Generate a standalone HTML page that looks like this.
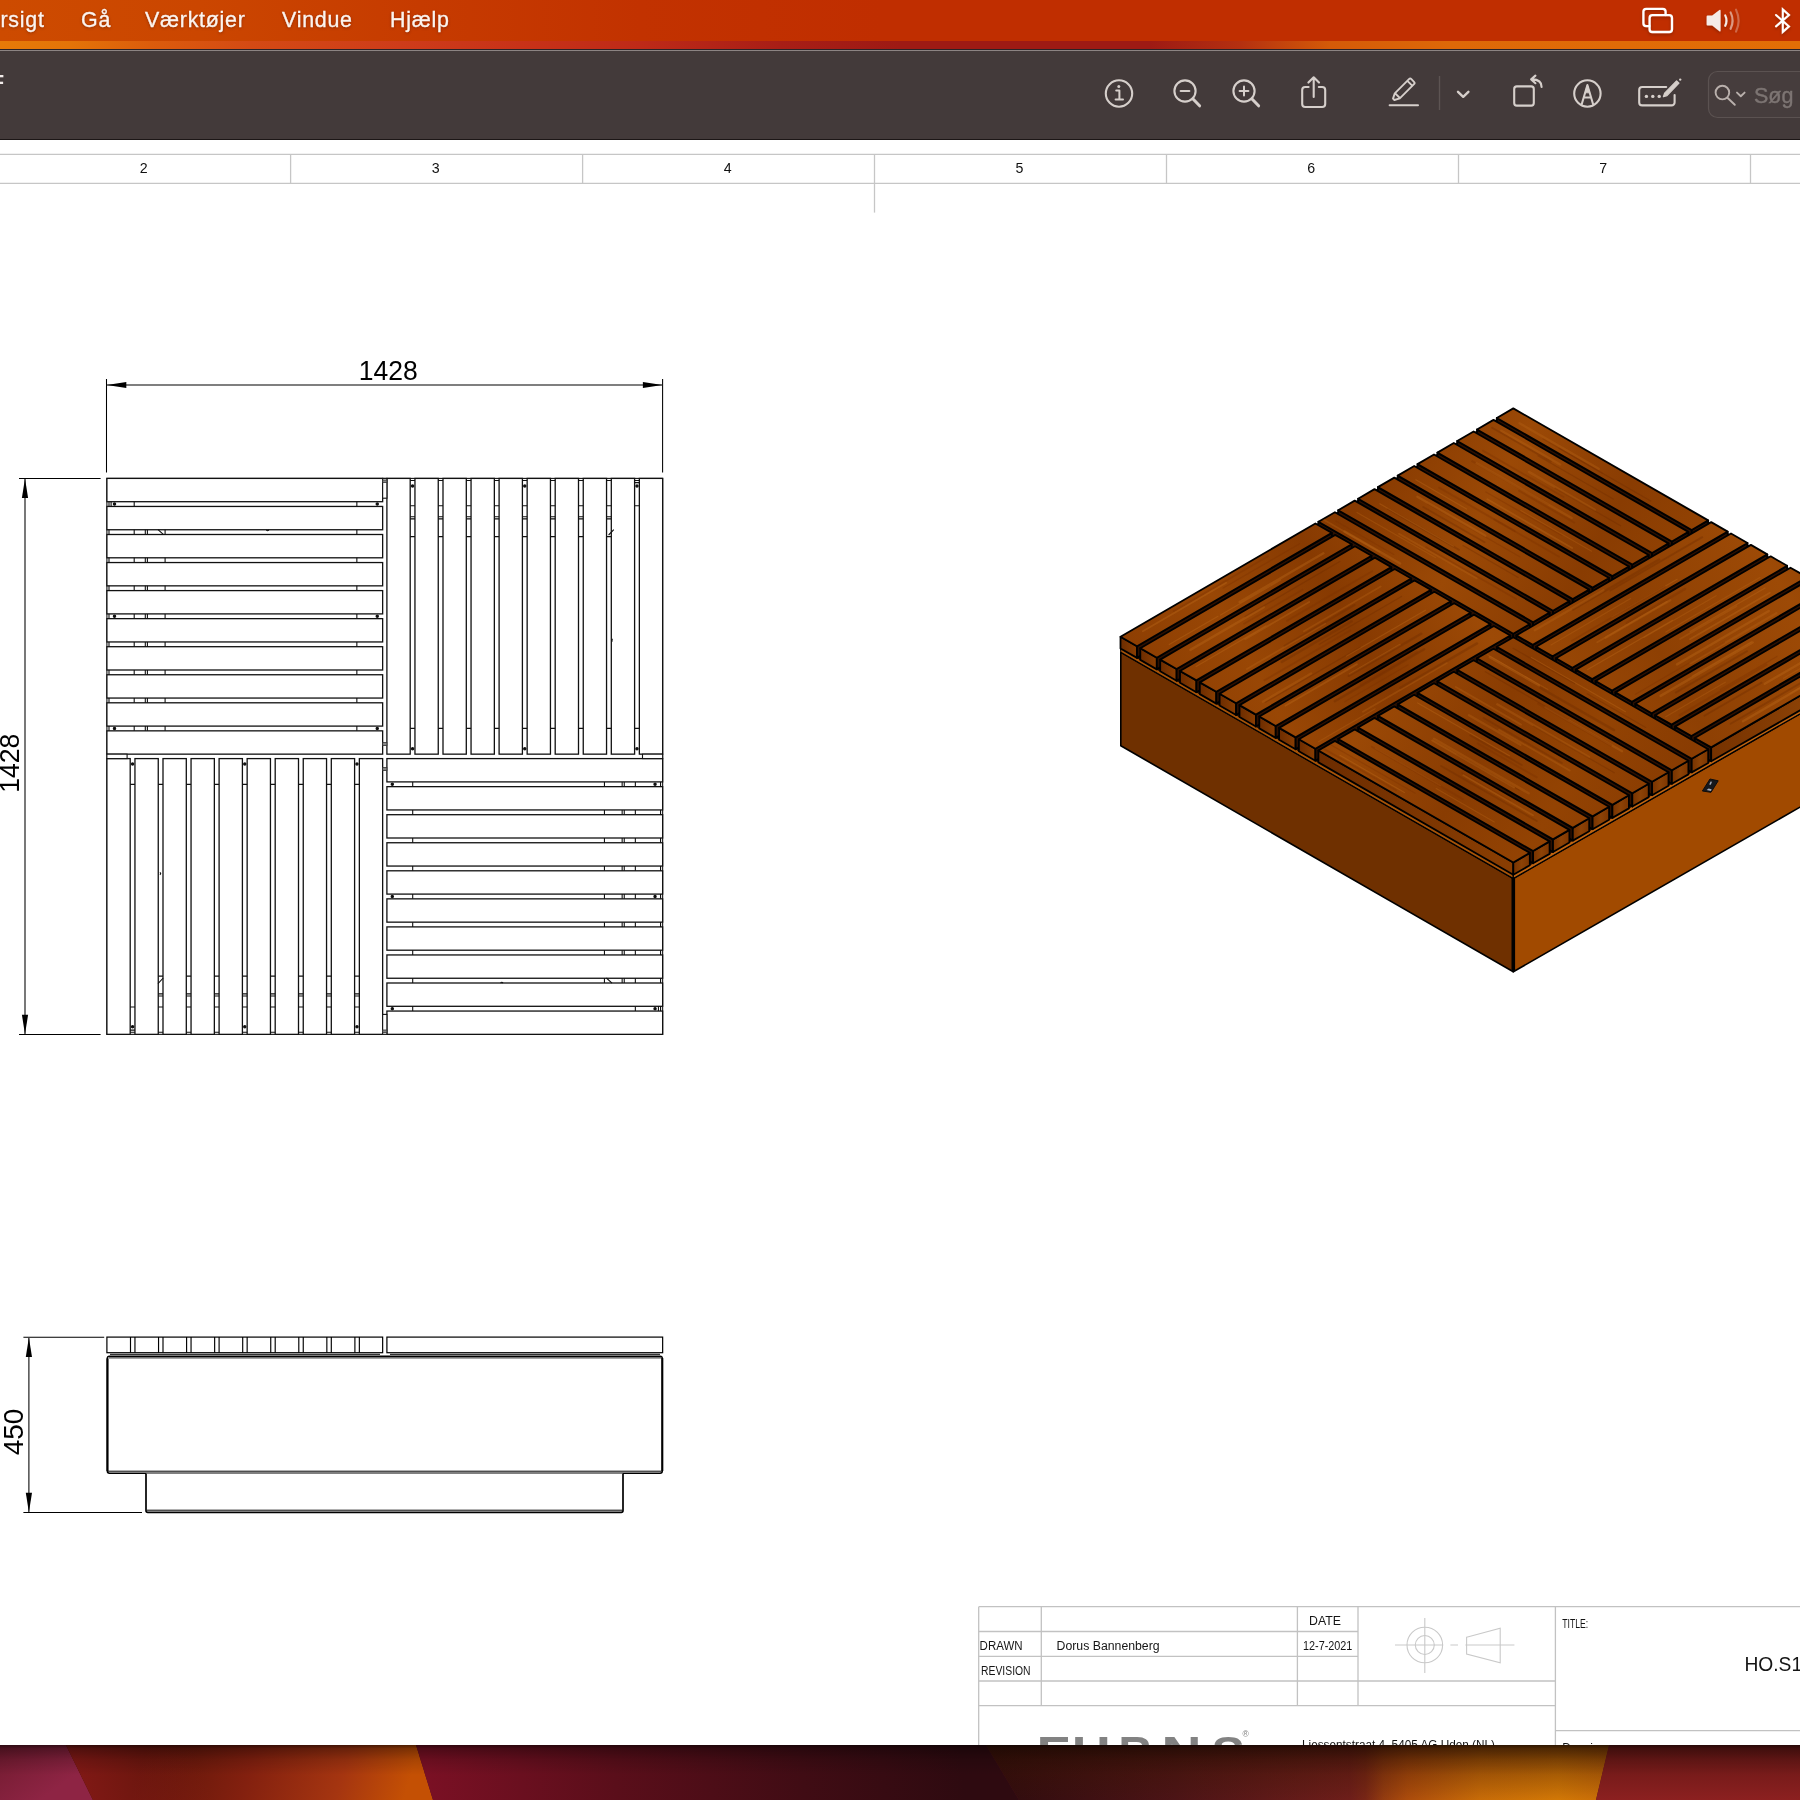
<!DOCTYPE html>
<html lang="da"><head><meta charset="utf-8"><title>HO.S10 – Preview</title>
<style>

html,body{margin:0;padding:0;background:#fff;}
body{width:1800px;height:1800px;overflow:hidden;position:relative;font-family:"Liberation Sans",sans-serif;}
.menubar{position:absolute;left:0;top:0;width:1800px;height:41px;background:linear-gradient(90deg,#cd4b00 0px,#cb4600 200px,#c63b00 420px,#c23200 640px,#c02e00 880px,#c02e00 1800px);overflow:hidden;}
.mi{position:absolute;top:8px;font-size:21.4px;letter-spacing:0.75px;line-height:24px;color:#fdf4ee;white-space:nowrap;text-shadow:0 1px 3px rgba(60,10,0,0.45),0 0 1px rgba(60,10,0,0.3);-webkit-text-stroke:0.35px #fdf4ee;}
.mbicons{position:absolute;left:0;top:0;}
.strip{position:absolute;left:0;top:41px;width:1800px;height:9px;background:linear-gradient(90deg,#e67a08 0px,#e47408 70px,#dc5c0c 150px,#d44a14 250px,#ce3c1a 400px,#c83218 520px,#be2a18 640px,#a81e16 780px,#9e1a14 900px,#9e1a14 1150px,#b43010 1240px,#d45a08 1330px,#de6808 1450px,#e26e06 1800px);}
.winedge0{position:absolute;left:0;top:49px;width:1800px;height:1px;background:#2a2226;}
.winedge1{position:absolute;left:0;top:50px;width:1800px;height:1px;background:#8c8483;}
.toolbar{position:absolute;left:0;top:51px;width:1800px;height:88px;background:#433a3a;overflow:hidden;}
.tbline{position:absolute;left:0;top:139px;width:1800px;height:1px;background:#1c1616;}
.ttl{position:absolute;left:-38px;top:19px;font-size:21px;line-height:24px;font-weight:bold;color:#f2ecea;}
.sog{position:absolute;left:1754px;top:33px;font-size:21.5px;line-height:24px;color:#7d7573;-webkit-text-stroke:0.4px #7d7573;}
.wall{position:absolute;left:0;top:1744px;}
#dwg{position:absolute;left:0;top:140px;will-change:transform;}
.menubar,.toolbar{will-change:transform;}


.tv{fill:url(#gtv);}
.tu{fill:url(#gtu);}
.sl{fill:url(#gsl);}
.sr{fill:url(#gsr);}
.sg{fill:#2e1000;}

#dwg text{font-family:"Liberation Sans",sans-serif;}
</style></head>
<body>
<svg id="dwg" width="1800" height="1605" viewBox="0 140 1800 1605">
<g stroke="#c6c6c6" stroke-width="1.3" fill="none">
<path d="M0 154.3 H1800 M0 183.3 H1800"/>
<path d="M290.6 154.3 V183.3"/>
<path d="M582.6 154.3 V183.3"/>
<path d="M1166.5 154.3 V183.3"/>
<path d="M1458.5 154.3 V183.3"/>
<path d="M1750.5 154.3 V183.3"/>
<path d="M874.5 154.3 V212.6"/>
</g>
<g font-size="14.2" fill="#111" text-anchor="middle">
<text x="143.8" y="173.2">2</text>
<text x="435.6" y="173.2">3</text>
<text x="727.6" y="173.2">4</text>
<text x="1019.4" y="173.2">5</text>
<text x="1311.3" y="173.2">6</text>
<text x="1603.3" y="173.2">7</text>
</g>
<g fill="#fff" stroke="#111" stroke-width="1.3" stroke-linejoin="miter">
<rect x="106.9" y="478.4" width="555.75" height="555.95" fill="none" stroke-width="1.1"/>
<rect x="106.9" y="478.4" width="275.75" height="23.3"/>
<rect x="106.9" y="506.45" width="275.75" height="23.3"/>
<rect x="106.9" y="534.5" width="275.75" height="23.3"/>
<rect x="106.9" y="562.55" width="275.75" height="23.3"/>
<rect x="106.9" y="590.6" width="275.75" height="23.3"/>
<rect x="106.9" y="618.65" width="275.75" height="23.3"/>
<rect x="106.9" y="646.7" width="275.75" height="23.3"/>
<rect x="106.9" y="674.75" width="275.75" height="23.3"/>
<rect x="106.9" y="702.8" width="275.75" height="23.3"/>
<rect x="106.9" y="730.85" width="275.75" height="23.3"/>
<circle cx="114.5" cy="504.07" r="1.1" fill="#000"/><circle cx="377.25" cy="504.07" r="1.1" fill="#000"/>
<circle cx="114.5" cy="616.27" r="1.1" fill="#000"/><circle cx="377.25" cy="616.27" r="1.1" fill="#000"/>
<circle cx="114.5" cy="728.47" r="1.1" fill="#000"/><circle cx="377.25" cy="728.47" r="1.1" fill="#000"/>
<path d="M109 501.7V506.45M111.1 501.7V506.45M134.2 501.7V506.45M356.85 501.7V506.45M109 529.75V534.5M134.2 529.75V534.5M145.3 529.75V534.5M147.4 529.75V534.5M165.1 529.75V534.5M356.85 529.75V534.5M109 557.8V562.55M134.2 557.8V562.55M145.3 557.8V562.55M147.4 557.8V562.55M165.1 557.8V562.55M356.85 557.8V562.55M109 585.85V590.6M134.2 585.85V590.6M145.3 585.85V590.6M147.4 585.85V590.6M165.1 585.85V590.6M356.85 585.85V590.6M109 613.9V618.65M134.2 613.9V618.65M145.3 613.9V618.65M147.4 613.9V618.65M165.1 613.9V618.65M356.85 613.9V618.65M109 641.95V646.7M134.2 641.95V646.7M145.3 641.95V646.7M147.4 641.95V646.7M165.1 641.95V646.7M356.85 641.95V646.7M109 670V674.75M134.2 670V674.75M145.3 670V674.75M147.4 670V674.75M165.1 670V674.75M356.85 670V674.75M109 698.05V702.8M134.2 698.05V702.8M145.3 698.05V702.8M147.4 698.05V702.8M165.1 698.05V702.8M356.85 698.05V702.8M109 726.1V730.85M134.2 726.1V730.85M145.3 726.1V730.85M147.4 726.1V730.85M165.1 726.1V730.85M356.85 726.1V730.85" stroke-width="1.1"/>
<rect x="386.9" y="478.4" width="23.3" height="275.75"/>
<rect x="414.95" y="478.4" width="23.3" height="275.75"/>
<rect x="443" y="478.4" width="23.3" height="275.75"/>
<rect x="471.05" y="478.4" width="23.3" height="275.75"/>
<rect x="499.1" y="478.4" width="23.3" height="275.75"/>
<rect x="527.15" y="478.4" width="23.3" height="275.75"/>
<rect x="555.2" y="478.4" width="23.3" height="275.75"/>
<rect x="583.25" y="478.4" width="23.3" height="275.75"/>
<rect x="611.3" y="478.4" width="23.3" height="275.75"/>
<rect x="639.35" y="478.4" width="23.3" height="275.75"/>
<circle cx="412.57" cy="486" r="1.1" fill="#000"/><circle cx="412.57" cy="748.75" r="1.1" fill="#000"/>
<circle cx="524.77" cy="486" r="1.1" fill="#000"/><circle cx="524.77" cy="748.75" r="1.1" fill="#000"/>
<circle cx="636.97" cy="486" r="1.1" fill="#000"/><circle cx="636.97" cy="748.75" r="1.1" fill="#000"/>
<path d="M410.2 480.5H414.95M410.2 505.7H414.95M410.2 516.8H414.95M410.2 518.9H414.95M410.2 536.6H414.95M410.2 728.35H414.95M438.25 480.5H443M438.25 505.7H443M438.25 516.8H443M438.25 518.9H443M438.25 536.6H443M438.25 728.35H443M466.3 480.5H471.05M466.3 505.7H471.05M466.3 516.8H471.05M466.3 518.9H471.05M466.3 536.6H471.05M466.3 728.35H471.05M494.35 480.5H499.1M494.35 505.7H499.1M494.35 516.8H499.1M494.35 518.9H499.1M494.35 536.6H499.1M494.35 728.35H499.1M522.4 480.5H527.15M522.4 505.7H527.15M522.4 516.8H527.15M522.4 518.9H527.15M522.4 536.6H527.15M522.4 728.35H527.15M550.45 480.5H555.2M550.45 505.7H555.2M550.45 516.8H555.2M550.45 518.9H555.2M550.45 536.6H555.2M550.45 728.35H555.2M578.5 480.5H583.25M578.5 505.7H583.25M578.5 516.8H583.25M578.5 518.9H583.25M578.5 536.6H583.25M578.5 728.35H583.25M606.55 480.5H611.3M606.55 505.7H611.3M606.55 516.8H611.3M606.55 518.9H611.3M606.55 536.6H611.3M606.55 728.35H611.3M634.6 480.5H639.35M634.6 482.6H639.35M634.6 505.7H639.35M634.6 728.35H639.35" stroke-width="1.1"/>
<rect x="106.9" y="758.6" width="23.3" height="275.75"/>
<rect x="134.95" y="758.6" width="23.3" height="275.75"/>
<rect x="163" y="758.6" width="23.3" height="275.75"/>
<rect x="191.05" y="758.6" width="23.3" height="275.75"/>
<rect x="219.1" y="758.6" width="23.3" height="275.75"/>
<rect x="247.15" y="758.6" width="23.3" height="275.75"/>
<rect x="275.2" y="758.6" width="23.3" height="275.75"/>
<rect x="303.25" y="758.6" width="23.3" height="275.75"/>
<rect x="331.3" y="758.6" width="23.3" height="275.75"/>
<rect x="359.35" y="758.6" width="23.3" height="275.75"/>
<circle cx="132.58" cy="1026.75" r="1.1" fill="#000"/><circle cx="132.58" cy="764" r="1.1" fill="#000"/>
<circle cx="244.78" cy="1026.75" r="1.1" fill="#000"/><circle cx="244.78" cy="764" r="1.1" fill="#000"/>
<circle cx="356.98" cy="1026.75" r="1.1" fill="#000"/><circle cx="356.98" cy="764" r="1.1" fill="#000"/>
<path d="M130.2 1032.25H134.95M130.2 1030.15H134.95M130.2 1007.05H134.95M130.2 784.4H134.95M158.25 1032.25H163M158.25 1007.05H163M158.25 995.95H163M158.25 993.85H163M158.25 976.15H163M158.25 784.4H163M186.3 1032.25H191.05M186.3 1007.05H191.05M186.3 995.95H191.05M186.3 993.85H191.05M186.3 976.15H191.05M186.3 784.4H191.05M214.35 1032.25H219.1M214.35 1007.05H219.1M214.35 995.95H219.1M214.35 993.85H219.1M214.35 976.15H219.1M214.35 784.4H219.1M242.4 1032.25H247.15M242.4 1007.05H247.15M242.4 995.95H247.15M242.4 993.85H247.15M242.4 976.15H247.15M242.4 784.4H247.15M270.45 1032.25H275.2M270.45 1007.05H275.2M270.45 995.95H275.2M270.45 993.85H275.2M270.45 976.15H275.2M270.45 784.4H275.2M298.5 1032.25H303.25M298.5 1007.05H303.25M298.5 995.95H303.25M298.5 993.85H303.25M298.5 976.15H303.25M298.5 784.4H303.25M326.55 1032.25H331.3M326.55 1007.05H331.3M326.55 995.95H331.3M326.55 993.85H331.3M326.55 976.15H331.3M326.55 784.4H331.3M354.6 1032.25H359.35M354.6 1007.05H359.35M354.6 995.95H359.35M354.6 993.85H359.35M354.6 976.15H359.35M354.6 784.4H359.35" stroke-width="1.1"/>
<rect x="386.9" y="758.6" width="275.75" height="23.3"/>
<rect x="386.9" y="786.65" width="275.75" height="23.3"/>
<rect x="386.9" y="814.7" width="275.75" height="23.3"/>
<rect x="386.9" y="842.75" width="275.75" height="23.3"/>
<rect x="386.9" y="870.8" width="275.75" height="23.3"/>
<rect x="386.9" y="898.85" width="275.75" height="23.3"/>
<rect x="386.9" y="926.9" width="275.75" height="23.3"/>
<rect x="386.9" y="954.95" width="275.75" height="23.3"/>
<rect x="386.9" y="983" width="275.75" height="23.3"/>
<rect x="386.9" y="1011.05" width="275.75" height="23.3"/>
<circle cx="655.05" cy="784.27" r="1.1" fill="#000"/><circle cx="392.3" cy="784.27" r="1.1" fill="#000"/>
<circle cx="655.05" cy="896.48" r="1.1" fill="#000"/><circle cx="392.3" cy="896.48" r="1.1" fill="#000"/>
<circle cx="655.05" cy="1008.67" r="1.1" fill="#000"/><circle cx="392.3" cy="1008.67" r="1.1" fill="#000"/>
<path d="M660.55 781.9V786.65M635.35 781.9V786.65M624.25 781.9V786.65M622.15 781.9V786.65M604.45 781.9V786.65M412.7 781.9V786.65M660.55 809.95V814.7M635.35 809.95V814.7M624.25 809.95V814.7M622.15 809.95V814.7M604.45 809.95V814.7M412.7 809.95V814.7M660.55 838V842.75M635.35 838V842.75M624.25 838V842.75M622.15 838V842.75M604.45 838V842.75M412.7 838V842.75M660.55 866.05V870.8M635.35 866.05V870.8M624.25 866.05V870.8M622.15 866.05V870.8M604.45 866.05V870.8M412.7 866.05V870.8M660.55 894.1V898.85M635.35 894.1V898.85M624.25 894.1V898.85M622.15 894.1V898.85M604.45 894.1V898.85M412.7 894.1V898.85M660.55 922.15V926.9M635.35 922.15V926.9M624.25 922.15V926.9M622.15 922.15V926.9M604.45 922.15V926.9M412.7 922.15V926.9M660.55 950.2V954.95M635.35 950.2V954.95M624.25 950.2V954.95M622.15 950.2V954.95M604.45 950.2V954.95M412.7 950.2V954.95M660.55 978.25V983M635.35 978.25V983M624.25 978.25V983M622.15 978.25V983M604.45 978.25V983M412.7 978.25V983M660.55 1006.3V1011.05M658.45 1006.3V1011.05M635.35 1006.3V1011.05M412.7 1006.3V1011.05" stroke-width="1.1"/>
<path d="M158 529.7 l5.6 5 M608.6 535 l5.2 -5.4 M158 983.6 l5.2 -5.6 M606.4 978 l5.6 5.2 M266.4 529.9 q1.2 1.8 2.4 0 M612.6 639 q-1.6 1.2 0 2.4 M159.9 872.4 q1.6 1.2 0 2.4 M500.6 983.1 q1.2 -1.8 2.4 0" fill="none" stroke-width="1.1"/>
<rect x="382.65" y="478.4" width="4.25" height="19.8" stroke-width="1.1"/>
<rect x="382.65" y="1014.4" width="4.25" height="19.9" stroke-width="1.1"/>
<rect x="106.9" y="754.15" width="20.2" height="4.45" stroke-width="1.1"/>
<rect x="642.5" y="754.15" width="20.15" height="4.45" stroke-width="1.1"/>
<g fill="#8a8a8a" stroke="#333" stroke-width="0.8"><rect x="382.7" y="742.6" width="4.2" height="3"/><rect x="382.7" y="767.6" width="4.2" height="3"/><rect x="382.7" y="480" width="4.2" height="2.4"/><rect x="382.7" y="1030" width="4.2" height="2.4"/></g>
</g>
<g stroke="#000" stroke-width="1.05" fill="none">
<path d="M106.5 379 V472.6 M662.6 379 V472.6 M107 385 H662"/>
<path d="M19 478.5 H100.6 M19 1034.4 H100.6 M25 479 V1034"/>
</g>
<polygon points="106.8,385 126.3,381.9 126.3,388.1" fill="#000" stroke="none"/>
<polygon points="662.4,385 642.9,388.1 642.9,381.9" fill="#000" stroke="none"/>
<polygon points="25,478.6 28.1,498.1 21.9,498.1" fill="#000" stroke="none"/>
<polygon points="25,1034.2 21.9,1014.7 28.1,1014.7" fill="#000" stroke="none"/>
<text x="358.8" y="379.6" font-size="28" textLength="59" lengthAdjust="spacingAndGlyphs" fill="#000" class="dim">1428</text>
<text transform="translate(19 763.2) rotate(-90)" font-size="28" text-anchor="middle" textLength="59" lengthAdjust="spacingAndGlyphs" fill="#000" class="dim">1428</text>
<g fill="#fff" stroke="#000" stroke-width="1.2">
<rect x="106.9" y="1337.1" width="275.75" height="15.6"/>
<path d="M130.5 1337.1V1352.7M134.95 1337.1V1352.7M158.55 1337.1V1352.7M163 1337.1V1352.7M186.6 1337.1V1352.7M191.05 1337.1V1352.7M214.65 1337.1V1352.7M219.1 1337.1V1352.7M242.7 1337.1V1352.7M247.15 1337.1V1352.7M270.75 1337.1V1352.7M275.2 1337.1V1352.7M298.8 1337.1V1352.7M303.25 1337.1V1352.7M326.85 1337.1V1352.7M331.3 1337.1V1352.7M354.9 1337.1V1352.7M359.35 1337.1V1352.7" fill="none" stroke-width="1.15"/>
<rect x="386.9" y="1337.1" width="275.75" height="15.6"/>
<path d="M110 1354.3 H380 M390 1354.3 H660" fill="none" stroke-width="1"/>
<rect x="107.3" y="1356.2" width="555" height="117" rx="2.2" stroke-width="1.5"/>
<path d="M109 1357.9 H661" fill="none" stroke-width="0.9"/>
<path d="M107.5 1358.4 V1471" fill="none" stroke-width="2.1"/>
<path d="M108 1471.2 H661.6" fill="none" stroke-width="1"/>
<path d="M662.3 1358 V1471" fill="none" stroke-width="2"/>
<path d="M146 1473.4 V1510.6 q0 1.8 1.8 1.8 H621.2 q1.8 0 1.8 -1.8 V1473.4" stroke-width="1.7"/>
<path d="M147 1510.2 H622" fill="none" stroke-width="1"/>
</g>
<g stroke="#000" stroke-width="1.05" fill="none">
<path d="M23.4 1337.2 H104.2 M23.4 1512.4 H142 M28.9 1338 V1512"/>
</g>
<polygon points="28.9,1337.4 32,1356.9 25.8,1356.9" fill="#000" stroke="none"/>
<polygon points="28.9,1512.2 25.8,1492.7 32,1492.7" fill="#000" stroke="none"/>
<text transform="translate(22.9 1432) rotate(-90)" font-size="28" text-anchor="middle" fill="#000" class="dim">450</text>
<defs>
<linearGradient id="gtv" gradientUnits="userSpaceOnUse" x1="1120" y1="640" x2="1520" y2="410" spreadMethod="reflect">
<stop offset="0" stop-color="#8d3e02"/><stop offset="0.22" stop-color="#994705"/><stop offset="0.45" stop-color="#873a01"/><stop offset="0.7" stop-color="#9d4a06"/><stop offset="1" stop-color="#8e4003"/></linearGradient>
<linearGradient id="gtu" gradientUnits="userSpaceOnUse" x1="1120" y1="640" x2="1520" y2="866" spreadMethod="reflect">
<stop offset="0" stop-color="#904103"/><stop offset="0.3" stop-color="#873a01"/><stop offset="0.55" stop-color="#9b4906"/><stop offset="0.8" stop-color="#893c02"/><stop offset="1" stop-color="#934303"/></linearGradient>
<linearGradient id="gsl" x1="0" y1="0" x2="1" y2="0"><stop offset="0" stop-color="#6c2c00"/><stop offset="1" stop-color="#8a3e02"/></linearGradient>
<linearGradient id="gsr" x1="0" y1="0" x2="1" y2="0"><stop offset="0" stop-color="#763200"/><stop offset="0.5" stop-color="#8c4206"/><stop offset="1" stop-color="#7e3600"/></linearGradient>
<clipPath id="isoclip"><rect x="1000" y="300" width="800" height="800"/></clipPath>
</defs>
<g clip-path="url(#isoclip)" stroke-linejoin="round">
<polygon points="1120.8,652.3 1513.3,878.5 1513.3,971.8 1120.8,745.8" fill="#6f3000" stroke="#000" stroke-width="1.6"/>
<polygon points="1513.3,878.5 1906.1,652.8 1906.1,746.1 1513.3,971.8" fill="#a14a00" stroke="#000" stroke-width="1.6"/>
<polygon points="1120.5,648.0 1513.3,874.2 1513.3,878.5 1120.8,652.3" fill="#a85408" stroke="#000" stroke-width="1.1"/>
<polygon points="1513.3,874.2 1906.1,648.9 1906.1,652.8 1513.3,878.5" fill="#c06410" stroke="#000" stroke-width="1.1"/>
<polygon points="1120.5,637.8 1120.5,648.5 1513.3,874.7 1906.1,649.6 1906.1,635.4 1513.3,409.6" fill="#2a0f00"/>
<path d="M1513.3 877.5 V970.8" stroke="#000" stroke-width="3.6" stroke-linecap="butt"/>
<polygon points="1710,779 1718.2,780.8 1711,792.3 1702.4,791" fill="#17181c" stroke="#0c0c0e" stroke-width="1" stroke-linejoin="round"/>
<path d="M1710.6 781.4 l1.4 0.4 l-1.2 3 l-1.6 -0.4z M1708.6 788.6 l3 0.6 l-0.6 1.8 l-4.4 -1z" fill="#a4acbc"/>
<g stroke="#000" stroke-width="1.8">
<polygon points="1496.8,418.0 1691.7,530.0 1691.7,544.9 1496.8,432.6" class="sg"/><polygon points="1691.7,530.0 1708.2,520.4 1708.2,535.5 1691.7,544.9" class="sg"/><polygon points="1496.8,418.0 1691.7,530.0 1708.2,520.4 1513.3,408.4" class="tu"/>
<g fill="none" stroke-linecap="round"><path d="M1519.5 423.2L1598.7 468.8" stroke="#b86418" stroke-opacity="0.35" stroke-width="2.4"/><path d="M1559.0 448.2L1650.7 500.9" stroke="#6e2c00" stroke-opacity="0.35" stroke-width="1.2"/><path d="M1543.1 439.1L1602.7 473.4" stroke="#7a3200" stroke-opacity="0.35" stroke-width="1.2"/></g>
<polygon points="1477.0,429.5 1671.9,541.5 1671.9,556.3 1477.0,444.0" class="sg"/><polygon points="1671.9,541.5 1688.4,531.9 1688.4,546.9 1671.9,556.3" class="sg"/><polygon points="1477.0,429.5 1671.9,541.5 1688.4,531.9 1493.5,419.9" class="tu"/>
<g fill="none" stroke-linecap="round"><path d="M1501.3 430.7L1560.1 464.5" stroke="#b86418" stroke-opacity="0.35" stroke-width="2.4"/><path d="M1492.1 427.8L1550.8 461.5" stroke="#6e2c00" stroke-opacity="0.35" stroke-width="1.8"/><path d="M1537.9 455.8L1613.3 499.1" stroke="#6e2c00" stroke-opacity="0.35" stroke-width="1.2"/></g>
<polygon points="1457.2,441.0 1652.1,553.0 1652.1,567.7 1457.2,455.3" class="sg"/><polygon points="1652.1,553.0 1668.5,543.4 1668.5,558.2 1652.1,567.7" class="sg"/><polygon points="1457.2,441.0 1652.1,553.0 1668.5,543.4 1473.6,431.5" class="tu"/>
<g fill="none" stroke-linecap="round"><path d="M1528.9 471.9L1594.8 509.8" stroke="#b86418" stroke-opacity="0.35" stroke-width="2.4"/><path d="M1482.8 450.6L1563.5 497.0" stroke="#7a3200" stroke-opacity="0.35" stroke-width="1.8"/><path d="M1555.2 488.2L1620.6 525.8" stroke="#6e2c00" stroke-opacity="0.35" stroke-width="1.2"/></g>
<polygon points="1437.4,452.6 1632.3,564.5 1632.3,579.0 1437.4,466.7" class="sg"/><polygon points="1632.3,564.5 1648.7,555.0 1648.7,569.6 1632.3,579.0" class="sg"/><polygon points="1437.4,452.6 1632.3,564.5 1648.7,555.0 1453.8,443.0" class="tu"/>
<g fill="none" stroke-linecap="round"><path d="M1472.1 461.1L1547.7 504.5" stroke="#7a3200" stroke-opacity="0.35" stroke-width="1.8"/><path d="M1476.6 463.3L1571.7 518.0" stroke="#b86418" stroke-opacity="0.35" stroke-width="2.4"/><path d="M1519.0 490.8L1574.3 522.6" stroke="#7a3200" stroke-opacity="0.35" stroke-width="1.8"/></g>
<polygon points="1417.5,464.1 1612.4,576.1 1612.4,590.4 1417.5,478.1" class="sg"/><polygon points="1612.4,576.1 1628.9,566.5 1628.9,581.0 1612.4,590.4" class="sg"/><polygon points="1417.5,464.1 1612.4,576.1 1628.9,566.5 1434.0,454.5" class="tu"/>
<g fill="none" stroke-linecap="round"><path d="M1487.4 499.3L1572.1 548.0" stroke="#c06c1c" stroke-opacity="0.35" stroke-width="1.8"/><path d="M1485.9 491.9L1561.8 535.5" stroke="#7a3200" stroke-opacity="0.35" stroke-width="1.2"/><path d="M1520.8 510.5L1591.6 551.2" stroke="#b86418" stroke-opacity="0.35" stroke-width="1.2"/></g>
<polygon points="1397.7,475.6 1592.6,587.6 1592.6,601.8 1397.7,489.5" class="sg"/><polygon points="1592.6,587.6 1609.1,578.0 1609.1,592.3 1592.6,601.8" class="sg"/><polygon points="1397.7,475.6 1592.6,587.6 1609.1,578.0 1414.2,466.0" class="tu"/>
<g fill="none" stroke-linecap="round"><path d="M1439.1 487.6L1514.8 531.1" stroke="#7a3200" stroke-opacity="0.35" stroke-width="1.8"/><path d="M1494.4 519.5L1559.1 556.7" stroke="#7a3200" stroke-opacity="0.35" stroke-width="1.8"/><path d="M1415.8 479.8L1466.6 509.0" stroke="#c06c1c" stroke-opacity="0.35" stroke-width="1.2"/></g>
<polygon points="1377.9,487.1 1572.8,599.1 1572.8,613.1 1377.9,500.8" class="sg"/><polygon points="1572.8,599.1 1589.2,589.6 1589.2,603.7 1572.8,613.1" class="sg"/><polygon points="1377.9,487.1 1572.8,599.1 1589.2,589.6 1394.3,477.6" class="tu"/>
<g fill="none" stroke-linecap="round"><path d="M1427.8 503.9L1519.8 556.8" stroke="#7a3200" stroke-opacity="0.35" stroke-width="1.2"/><path d="M1423.2 507.0L1484.6 542.2" stroke="#6e2c00" stroke-opacity="0.35" stroke-width="1.8"/><path d="M1417.4 496.7L1485.3 535.8" stroke="#c06c1c" stroke-opacity="0.35" stroke-width="2.4"/></g>
<polygon points="1358.1,498.7 1553.0,610.7 1553.0,624.5 1358.1,512.2" class="sg"/><polygon points="1553.0,610.7 1569.4,601.1 1569.4,615.1 1553.0,624.5" class="sg"/><polygon points="1358.1,498.7 1553.0,610.7 1569.4,601.1 1374.5,489.1" class="tu"/>
<g fill="none" stroke-linecap="round"><path d="M1463.0 545.6L1518.2 577.4" stroke="#6e2c00" stroke-opacity="0.35" stroke-width="1.2"/><path d="M1387.8 508.9L1459.1 549.9" stroke="#6e2c00" stroke-opacity="0.35" stroke-width="1.8"/><path d="M1379.8 503.8L1453.5 546.2" stroke="#c06c1c" stroke-opacity="0.35" stroke-width="1.2"/></g>
<polygon points="1338.2,510.2 1533.1,622.2 1533.1,635.9 1338.2,523.6" class="sg"/><polygon points="1533.1,622.2 1549.6,612.6 1549.6,626.4 1533.1,635.9" class="sg"/><polygon points="1338.2,510.2 1533.1,622.2 1549.6,612.6 1354.7,500.6" class="tu"/>
<g fill="none" stroke-linecap="round"><path d="M1399.0 533.7L1476.7 578.4" stroke="#b86418" stroke-opacity="0.35" stroke-width="1.8"/><path d="M1426.2 547.3L1516.2 599.0" stroke="#7a3200" stroke-opacity="0.35" stroke-width="1.8"/><path d="M1357.0 512.4L1435.4 557.5" stroke="#b86418" stroke-opacity="0.35" stroke-width="1.2"/></g>
<polygon points="1318.4,521.7 1513.3,633.7 1513.3,647.2 1318.4,534.9" class="sg"/><polygon points="1513.3,633.7 1529.8,624.1 1529.8,637.8 1513.3,647.2" class="sg"/><polygon points="1318.4,521.7 1513.3,633.7 1529.8,624.1 1334.9,512.2" class="tu"/>
<g fill="none" stroke-linecap="round"><path d="M1344.4 531.4L1400.2 563.5" stroke="#c06c1c" stroke-opacity="0.35" stroke-width="2.4"/><path d="M1324.2 520.0L1379.5 551.8" stroke="#b86418" stroke-opacity="0.35" stroke-width="1.8"/><path d="M1335.8 521.1L1393.8 554.4" stroke="#7a3200" stroke-opacity="0.35" stroke-width="1.2"/></g>
<polygon points="1120.5,636.8 1137.0,646.3 1137.0,657.9 1120.5,648.5" class="sl"/><polygon points="1137.0,646.3 1331.9,532.9 1331.9,546.2 1137.0,657.9" class="sg"/><polygon points="1120.5,636.8 1137.0,646.3 1331.9,532.9 1315.4,523.5" class="tv"/>
<g fill="none" stroke-linecap="round"><path d="M1223.2 588.1L1299.6 543.7" stroke="#7a3200" stroke-opacity="0.35" stroke-width="1.2"/><path d="M1173.7 611.1L1268.0 556.3" stroke="#7a3200" stroke-opacity="0.35" stroke-width="1.8"/><path d="M1142.8 631.3L1226.2 582.8" stroke="#c06c1c" stroke-opacity="0.35" stroke-width="1.8"/></g>
<polygon points="1140.3,648.2 1156.8,657.7 1156.8,669.4 1140.3,659.9" class="sl"/><polygon points="1156.8,657.7 1351.7,544.3 1351.7,557.6 1156.8,669.4" class="sg"/><polygon points="1140.3,648.2 1156.8,657.7 1351.7,544.3 1335.2,534.9" class="tv"/>
<g fill="none" stroke-linecap="round"><path d="M1169.2 644.5L1218.0 616.2" stroke="#c06c1c" stroke-opacity="0.35" stroke-width="1.2"/><path d="M1239.6 602.1L1323.4 553.3" stroke="#c06c1c" stroke-opacity="0.35" stroke-width="2.4"/><path d="M1220.5 615.1L1280.6 580.1" stroke="#c06c1c" stroke-opacity="0.35" stroke-width="1.2"/></g>
<polygon points="1160.2,659.6 1176.6,669.0 1176.6,680.8 1160.2,671.3" class="sl"/><polygon points="1176.6,669.0 1371.5,555.7 1371.5,569.0 1176.6,680.8" class="sg"/><polygon points="1160.2,659.6 1176.6,669.0 1371.5,555.7 1355.0,546.3" class="tv"/>
<g fill="none" stroke-linecap="round"><path d="M1190.4 649.9L1263.8 607.2" stroke="#c06c1c" stroke-opacity="0.35" stroke-width="2.4"/><path d="M1245.2 616.6L1339.8 561.6" stroke="#6e2c00" stroke-opacity="0.35" stroke-width="1.2"/><path d="M1244.1 623.8L1302.5 589.8" stroke="#7a3200" stroke-opacity="0.35" stroke-width="1.8"/></g>
<polygon points="1180.0,671.0 1196.4,680.4 1196.4,692.2 1180.0,682.7" class="sl"/><polygon points="1196.4,680.4 1391.3,567.1 1391.3,580.4 1196.4,692.2" class="sg"/><polygon points="1180.0,671.0 1196.4,680.4 1391.3,567.1 1374.9,557.6" class="tv"/>
<g fill="none" stroke-linecap="round"><path d="M1286.9 620.9L1372.2 571.3" stroke="#7a3200" stroke-opacity="0.35" stroke-width="1.8"/><path d="M1245.1 639.2L1309.2 602.0" stroke="#c06c1c" stroke-opacity="0.35" stroke-width="1.8"/><path d="M1196.1 666.5L1266.1 625.8" stroke="#c06c1c" stroke-opacity="0.35" stroke-width="1.2"/></g>
<polygon points="1199.8,682.4 1216.3,691.8 1216.3,703.6 1199.8,694.1" class="sl"/><polygon points="1216.3,691.8 1411.2,578.5 1411.2,591.8 1216.3,703.6" class="sg"/><polygon points="1199.8,682.4 1216.3,691.8 1411.2,578.5 1394.7,569.0" class="tv"/>
<g fill="none" stroke-linecap="round"><path d="M1303.9 631.2L1380.7 586.5" stroke="#b86418" stroke-opacity="0.35" stroke-width="1.8"/><path d="M1246.9 669.0L1325.2 623.5" stroke="#b86418" stroke-opacity="0.35" stroke-width="1.8"/><path d="M1284.4 645.8L1354.8 604.9" stroke="#6e2c00" stroke-opacity="0.35" stroke-width="1.8"/></g>
<polygon points="1219.6,693.8 1236.1,703.2 1236.1,715.0 1219.6,705.5" class="sl"/><polygon points="1236.1,703.2 1431.0,589.9 1431.0,603.3 1236.1,715.0" class="sg"/><polygon points="1219.6,693.8 1236.1,703.2 1431.0,589.9 1414.5,580.4" class="tv"/>
<g fill="none" stroke-linecap="round"><path d="M1264.4 680.4L1350.3 630.5" stroke="#7a3200" stroke-opacity="0.35" stroke-width="1.8"/><path d="M1319.3 644.2L1401.5 596.4" stroke="#6e2c00" stroke-opacity="0.35" stroke-width="1.2"/><path d="M1281.8 661.9L1351.6 621.3" stroke="#6e2c00" stroke-opacity="0.35" stroke-width="2.4"/></g>
<polygon points="1239.5,705.1 1255.9,714.6 1255.9,726.5 1239.5,717.0" class="sl"/><polygon points="1255.9,714.6 1450.8,601.3 1450.8,614.7 1255.9,726.5" class="sg"/><polygon points="1239.5,705.1 1255.9,714.6 1450.8,601.3 1434.4,591.8" class="tv"/>
<g fill="none" stroke-linecap="round"><path d="M1346.4 656.1L1425.4 610.2" stroke="#c06c1c" stroke-opacity="0.35" stroke-width="1.2"/><path d="M1262.8 701.7L1311.1 673.5" stroke="#b86418" stroke-opacity="0.35" stroke-width="2.4"/><path d="M1265.5 702.3L1360.2 647.2" stroke="#6e2c00" stroke-opacity="0.35" stroke-width="1.2"/></g>
<polygon points="1259.3,716.5 1275.7,726.0 1275.7,737.9 1259.3,728.4" class="sl"/><polygon points="1275.7,726.0 1470.6,612.7 1470.6,626.1 1275.7,737.9" class="sg"/><polygon points="1259.3,716.5 1275.7,726.0 1470.6,612.7 1454.2,603.2" class="tv"/>
<g fill="none" stroke-linecap="round"><path d="M1285.4 705.7L1357.0 664.1" stroke="#c06c1c" stroke-opacity="0.35" stroke-width="1.8"/><path d="M1349.6 674.0L1400.1 644.6" stroke="#c06c1c" stroke-opacity="0.35" stroke-width="1.8"/><path d="M1348.9 675.8L1421.2 633.7" stroke="#6e2c00" stroke-opacity="0.35" stroke-width="2.4"/></g>
<polygon points="1279.1,727.9 1295.6,737.4 1295.6,749.3 1279.1,739.8" class="sl"/><polygon points="1295.6,737.4 1490.5,624.1 1490.5,637.5 1295.6,749.3" class="sg"/><polygon points="1279.1,727.9 1295.6,737.4 1490.5,624.1 1474.0,614.6" class="tv"/>
<g fill="none" stroke-linecap="round"><path d="M1334.8 701.2L1424.1 649.3" stroke="#6e2c00" stroke-opacity="0.35" stroke-width="2.4"/><path d="M1360.9 684.4L1416.8 651.9" stroke="#7a3200" stroke-opacity="0.35" stroke-width="2.4"/><path d="M1344.7 701.8L1407.9 665.1" stroke="#7a3200" stroke-opacity="0.35" stroke-width="1.2"/></g>
<polygon points="1298.9,739.3 1315.4,748.8 1315.4,760.7 1298.9,751.2" class="sl"/><polygon points="1315.4,748.8 1510.3,635.5 1510.3,649.0 1315.4,760.7" class="sg"/><polygon points="1298.9,739.3 1315.4,748.8 1510.3,635.5 1493.8,626.0" class="tv"/>
<g fill="none" stroke-linecap="round"><path d="M1318.4 741.8L1375.1 708.8" stroke="#b86418" stroke-opacity="0.35" stroke-width="1.2"/><path d="M1362.9 711.7L1446.8 662.9" stroke="#b86418" stroke-opacity="0.35" stroke-width="1.8"/><path d="M1400.4 687.9L1477.0 643.4" stroke="#6e2c00" stroke-opacity="0.35" stroke-width="2.4"/></g>
<polygon points="1516.3,635.4 1532.8,644.9 1532.8,658.5 1516.3,649.0" class="sg"/><polygon points="1532.8,644.9 1727.7,531.6 1727.7,546.7 1532.8,658.5" class="sg"/><polygon points="1516.3,635.4 1532.8,644.9 1727.7,531.6 1711.2,522.1" class="tv"/>
<g fill="none" stroke-linecap="round"><path d="M1573.0 609.5L1659.1 559.5" stroke="#6e2c00" stroke-opacity="0.35" stroke-width="2.4"/><path d="M1610.4 590.5L1702.3 537.1" stroke="#6e2c00" stroke-opacity="0.35" stroke-width="1.8"/><path d="M1534.8 630.2L1603.5 590.2" stroke="#b86418" stroke-opacity="0.35" stroke-width="2.4"/></g>
<polygon points="1536.1,646.8 1552.6,656.3 1552.6,669.9 1536.1,660.4" class="sg"/><polygon points="1552.6,656.3 1747.5,543.0 1747.5,558.1 1552.6,669.9" class="sg"/><polygon points="1536.1,646.8 1552.6,656.3 1747.5,543.0 1731.0,533.5" class="tv"/>
<g fill="none" stroke-linecap="round"><path d="M1551.0 644.9L1630.6 598.6" stroke="#b86418" stroke-opacity="0.35" stroke-width="1.2"/><path d="M1612.0 617.1L1677.1 579.2" stroke="#c06c1c" stroke-opacity="0.35" stroke-width="1.2"/><path d="M1571.9 640.7L1664.9 586.6" stroke="#7a3200" stroke-opacity="0.35" stroke-width="1.8"/></g>
<polygon points="1556.0,658.2 1572.4,667.7 1572.4,681.3 1556.0,671.8" class="sg"/><polygon points="1572.4,667.7 1767.3,554.4 1767.3,569.6 1572.4,681.3" class="sg"/><polygon points="1556.0,658.2 1572.4,667.7 1767.3,554.4 1750.9,544.9" class="tv"/>
<g fill="none" stroke-linecap="round"><path d="M1626.8 622.9L1685.1 588.9" stroke="#7a3200" stroke-opacity="0.35" stroke-width="2.4"/><path d="M1605.6 637.8L1670.2 600.2" stroke="#b86418" stroke-opacity="0.35" stroke-width="2.4"/><path d="M1597.2 642.3L1666.8 601.8" stroke="#b86418" stroke-opacity="0.35" stroke-width="1.8"/></g>
<polygon points="1575.8,669.6 1592.2,679.1 1592.2,692.7 1575.8,683.2" class="sg"/><polygon points="1592.2,679.1 1787.1,565.8 1787.1,581.0 1592.2,692.7" class="sg"/><polygon points="1575.8,669.6 1592.2,679.1 1787.1,565.8 1770.7,556.3" class="tv"/>
<g fill="none" stroke-linecap="round"><path d="M1644.0 637.6L1716.1 595.7" stroke="#b86418" stroke-opacity="0.35" stroke-width="1.2"/><path d="M1665.9 632.1L1759.9 577.4" stroke="#b86418" stroke-opacity="0.35" stroke-width="1.2"/><path d="M1587.7 669.6L1672.5 620.3" stroke="#c06c1c" stroke-opacity="0.35" stroke-width="1.2"/></g>
<polygon points="1595.6,681.0 1612.1,690.5 1612.1,704.2 1595.6,694.7" class="sg"/><polygon points="1612.1,690.5 1807.0,577.1 1807.0,592.4 1612.1,704.2" class="sg"/><polygon points="1595.6,681.0 1612.1,690.5 1807.0,577.1 1790.5,567.7" class="tv"/>
<g fill="none" stroke-linecap="round"><path d="M1690.0 639.2L1769.9 592.7" stroke="#c06c1c" stroke-opacity="0.35" stroke-width="1.8"/><path d="M1690.2 631.6L1765.1 588.1" stroke="#c06c1c" stroke-opacity="0.35" stroke-width="1.2"/><path d="M1680.1 639.0L1736.5 606.2" stroke="#b86418" stroke-opacity="0.35" stroke-width="1.8"/></g>
<polygon points="1615.4,692.4 1631.9,701.9 1631.9,715.6 1615.4,706.1" class="sg"/><polygon points="1631.9,701.9 1826.8,588.5 1826.8,603.8 1631.9,715.6" class="sg"/><polygon points="1615.4,692.4 1631.9,701.9 1826.8,588.5 1810.3,579.1" class="tv"/>
<g fill="none" stroke-linecap="round"><path d="M1690.5 663.1L1776.3 613.2" stroke="#b86418" stroke-opacity="0.35" stroke-width="2.4"/><path d="M1635.5 694.2L1724.3 642.5" stroke="#7a3200" stroke-opacity="0.35" stroke-width="1.2"/><path d="M1677.0 664.4L1768.8 611.0" stroke="#c06c1c" stroke-opacity="0.35" stroke-width="2.4"/></g>
<polygon points="1635.3,703.8 1651.7,713.3 1651.7,727.0 1635.3,717.5" class="sg"/><polygon points="1651.7,713.3 1846.6,599.9 1846.6,615.3 1651.7,727.0" class="sg"/><polygon points="1635.3,703.8 1651.7,713.3 1846.6,599.9 1830.2,590.5" class="tv"/>
<g fill="none" stroke-linecap="round"><path d="M1692.3 676.0L1751.3 641.7" stroke="#b86418" stroke-opacity="0.35" stroke-width="1.2"/><path d="M1660.6 695.9L1752.7 642.4" stroke="#c06c1c" stroke-opacity="0.35" stroke-width="2.4"/><path d="M1675.7 692.6L1747.2 651.1" stroke="#6e2c00" stroke-opacity="0.35" stroke-width="1.8"/></g>
<polygon points="1655.1,715.2 1671.6,724.6 1671.6,738.4 1655.1,728.9" class="sg"/><polygon points="1671.6,724.6 1866.4,611.3 1866.4,626.7 1671.6,738.4" class="sg"/><polygon points="1655.1,715.2 1671.6,724.6 1866.4,611.3 1850.0,601.9" class="tv"/>
<g fill="none" stroke-linecap="round"><path d="M1665.7 716.8L1725.3 682.2" stroke="#b86418" stroke-opacity="0.35" stroke-width="1.2"/><path d="M1720.2 689.4L1776.9 656.4" stroke="#7a3200" stroke-opacity="0.35" stroke-width="1.2"/><path d="M1679.7 715.2L1766.4 664.8" stroke="#7a3200" stroke-opacity="0.35" stroke-width="2.4"/></g>
<polygon points="1674.9,726.6 1691.4,736.0 1691.4,749.8 1674.9,740.4" class="sg"/><polygon points="1691.4,736.0 1886.3,622.7 1886.3,638.1 1691.4,749.8" class="sg"/><polygon points="1674.9,726.6 1691.4,736.0 1886.3,622.7 1869.8,613.2" class="tv"/>
<g fill="none" stroke-linecap="round"><path d="M1764.8 683.8L1831.2 645.2" stroke="#c06c1c" stroke-opacity="0.35" stroke-width="2.4"/><path d="M1704.4 715.8L1761.6 682.6" stroke="#6e2c00" stroke-opacity="0.35" stroke-width="1.8"/><path d="M1783.5 678.3L1871.1 627.4" stroke="#b86418" stroke-opacity="0.35" stroke-width="1.2"/></g>
<polygon points="1694.7,738.0 1711.2,747.4 1711.2,761.3 1694.7,751.8" class="sg"/><polygon points="1711.2,747.4 1906.1,634.1 1906.1,649.6 1711.2,761.3" class="sr"/><polygon points="1694.7,738.0 1711.2,747.4 1906.1,634.1 1889.6,624.6" class="tv"/>
<g fill="none" stroke-linecap="round"><path d="M1790.2 693.4L1858.4 653.7" stroke="#b86418" stroke-opacity="0.35" stroke-width="1.2"/><path d="M1743.0 721.3L1814.8 679.5" stroke="#c06c1c" stroke-opacity="0.35" stroke-width="2.4"/><path d="M1730.6 723.8L1800.1 683.4" stroke="#6e2c00" stroke-opacity="0.35" stroke-width="1.8"/></g>
<polygon points="1496.8,646.8 1691.7,758.7 1691.7,772.4 1496.8,660.1" class="sg"/><polygon points="1691.7,758.7 1708.2,749.2 1708.2,763.0 1691.7,772.4" class="sr"/><polygon points="1496.8,646.8 1691.7,758.7 1708.2,749.2 1513.3,637.2" class="tu"/>
<g fill="none" stroke-linecap="round"><path d="M1531.3 657.6L1625.5 711.7" stroke="#c06c1c" stroke-opacity="0.35" stroke-width="1.2"/><path d="M1587.2 693.8L1645.7 727.4" stroke="#6e2c00" stroke-opacity="0.35" stroke-width="1.2"/><path d="M1513.1 648.2L1574.5 683.5" stroke="#6e2c00" stroke-opacity="0.35" stroke-width="1.2"/></g>
<polygon points="1477.0,658.3 1671.9,770.3 1671.9,783.8 1477.0,671.5" class="sg"/><polygon points="1671.9,770.3 1688.4,760.7 1688.4,774.4 1671.9,783.8" class="sr"/><polygon points="1477.0,658.3 1671.9,770.3 1688.4,760.7 1493.5,648.7" class="tu"/>
<g fill="none" stroke-linecap="round"><path d="M1487.2 654.6L1547.9 689.4" stroke="#b86418" stroke-opacity="0.35" stroke-width="1.2"/><path d="M1489.8 657.1L1538.9 685.3" stroke="#c06c1c" stroke-opacity="0.35" stroke-width="2.4"/><path d="M1540.6 688.0L1614.0 730.1" stroke="#6e2c00" stroke-opacity="0.35" stroke-width="2.4"/></g>
<polygon points="1457.2,669.8 1652.1,781.8 1652.1,795.2 1457.2,682.9" class="sg"/><polygon points="1652.1,781.8 1668.5,772.2 1668.5,785.7 1652.1,795.2" class="sr"/><polygon points="1457.2,669.8 1652.1,781.8 1668.5,772.2 1473.6,660.2" class="tu"/>
<g fill="none" stroke-linecap="round"><path d="M1545.5 707.2L1622.1 751.2" stroke="#c06c1c" stroke-opacity="0.35" stroke-width="2.4"/><path d="M1485.3 671.7L1568.1 719.2" stroke="#6e2c00" stroke-opacity="0.35" stroke-width="1.2"/><path d="M1538.3 703.7L1610.9 745.4" stroke="#7a3200" stroke-opacity="0.35" stroke-width="2.4"/></g>
<polygon points="1437.4,681.3 1632.3,793.3 1632.3,806.5 1437.4,694.2" class="sg"/><polygon points="1632.3,793.3 1648.7,783.8 1648.7,797.1 1632.3,806.5" class="sr"/><polygon points="1437.4,681.3 1632.3,793.3 1648.7,783.8 1453.8,671.8" class="tu"/>
<g fill="none" stroke-linecap="round"><path d="M1497.3 704.3L1589.0 757.0" stroke="#b86418" stroke-opacity="0.35" stroke-width="2.4"/><path d="M1533.5 726.2L1614.3 772.7" stroke="#6e2c00" stroke-opacity="0.35" stroke-width="1.2"/><path d="M1455.8 687.0L1521.1 724.6" stroke="#b86418" stroke-opacity="0.35" stroke-width="1.8"/></g>
<polygon points="1417.5,692.9 1612.4,804.9 1612.4,817.9 1417.5,705.6" class="sg"/><polygon points="1612.4,804.9 1628.9,795.3 1628.9,808.4 1612.4,817.9" class="sr"/><polygon points="1417.5,692.9 1612.4,804.9 1628.9,795.3 1434.0,683.3" class="tu"/>
<g fill="none" stroke-linecap="round"><path d="M1483.7 718.0L1561.9 763.0" stroke="#6e2c00" stroke-opacity="0.35" stroke-width="1.8"/><path d="M1469.0 715.3L1520.4 744.8" stroke="#b86418" stroke-opacity="0.35" stroke-width="2.4"/><path d="M1499.0 729.9L1569.8 770.6" stroke="#b86418" stroke-opacity="0.35" stroke-width="1.8"/></g>
<polygon points="1397.7,704.4 1592.6,816.4 1592.6,829.2 1397.7,717.0" class="sg"/><polygon points="1592.6,816.4 1609.1,806.8 1609.1,819.8 1592.6,829.2" class="sr"/><polygon points="1397.7,704.4 1592.6,816.4 1609.1,806.8 1414.2,694.8" class="tu"/>
<g fill="none" stroke-linecap="round"><path d="M1477.7 743.5L1536.8 777.4" stroke="#7a3200" stroke-opacity="0.35" stroke-width="1.8"/><path d="M1417.7 702.9L1509.4 755.7" stroke="#c06c1c" stroke-opacity="0.35" stroke-width="1.2"/><path d="M1470.1 735.3L1521.8 765.0" stroke="#6e2c00" stroke-opacity="0.35" stroke-width="1.8"/></g>
<polygon points="1377.9,715.9 1572.8,827.9 1572.8,840.6 1377.9,728.3" class="sg"/><polygon points="1572.8,827.9 1589.2,818.3 1589.2,831.2 1572.8,840.6" class="sr"/><polygon points="1377.9,715.9 1572.8,827.9 1589.2,818.3 1394.3,706.4" class="tu"/>
<g fill="none" stroke-linecap="round"><path d="M1456.8 754.2L1519.4 790.2" stroke="#6e2c00" stroke-opacity="0.35" stroke-width="1.2"/><path d="M1434.0 738.8L1528.7 793.3" stroke="#b86418" stroke-opacity="0.35" stroke-width="2.4"/><path d="M1432.1 740.4L1514.2 787.5" stroke="#c06c1c" stroke-opacity="0.35" stroke-width="1.8"/></g>
<polygon points="1358.1,727.5 1553.0,839.4 1553.0,852.0 1358.1,739.7" class="sg"/><polygon points="1553.0,839.4 1569.4,829.9 1569.4,842.5 1553.0,852.0" class="sr"/><polygon points="1358.1,727.5 1553.0,839.4 1569.4,829.9 1374.5,717.9" class="tu"/>
<g fill="none" stroke-linecap="round"><path d="M1441.1 766.0L1536.8 821.0" stroke="#6e2c00" stroke-opacity="0.35" stroke-width="1.8"/><path d="M1461.7 772.8L1510.6 800.8" stroke="#7a3200" stroke-opacity="0.35" stroke-width="1.2"/><path d="M1463.4 775.3L1533.0 815.3" stroke="#c06c1c" stroke-opacity="0.35" stroke-width="1.8"/></g>
<polygon points="1338.2,739.0 1533.1,851.0 1533.1,863.3 1338.2,751.1" class="sg"/><polygon points="1533.1,851.0 1549.6,841.4 1549.6,853.9 1533.1,863.3" class="sr"/><polygon points="1338.2,739.0 1533.1,851.0 1549.6,841.4 1354.7,729.4" class="tu"/>
<g fill="none" stroke-linecap="round"><path d="M1436.2 788.6L1494.3 822.0" stroke="#b86418" stroke-opacity="0.35" stroke-width="1.2"/><path d="M1375.1 748.2L1440.4 785.7" stroke="#c06c1c" stroke-opacity="0.35" stroke-width="1.2"/><path d="M1371.8 746.8L1463.0 799.1" stroke="#7a3200" stroke-opacity="0.35" stroke-width="1.8"/></g>
<polygon points="1318.4,750.5 1513.3,862.5 1513.3,874.7 1318.4,762.4" class="sl"/><polygon points="1513.3,862.5 1529.8,852.9 1529.8,865.3 1513.3,874.7" class="sr"/><polygon points="1318.4,750.5 1513.3,862.5 1529.8,852.9 1334.9,740.9" class="tu"/>
<g fill="none" stroke-linecap="round"><path d="M1324.3 749.1L1396.0 790.3" stroke="#7a3200" stroke-opacity="0.35" stroke-width="1.8"/><path d="M1339.9 755.3L1404.4 792.4" stroke="#c06c1c" stroke-opacity="0.35" stroke-width="1.2"/><path d="M1331.1 744.9L1415.2 793.2" stroke="#7a3200" stroke-opacity="0.35" stroke-width="1.2"/></g>
</g>
</g>
<g stroke="#c2c2c2" stroke-width="1.3" fill="none">
<path d="M978.7 1606.7 H1800 M978.7 1631.5 H1358 M978.7 1656.4 H1358 M978.7 1681 H1555.4 M978.7 1705.7 H1555.4 M1555.4 1730.7 H1800"/>
<path d="M978.7 1606.7 V1745 M1041.3 1606.7 V1705.7 M1297.4 1606.7 V1705.7 M1358 1606.7 V1705.7 M1555.4 1606.7 V1745"/>
</g>
<g stroke="#c9c9c9" stroke-width="1.1" fill="none">
<circle cx="1424.8" cy="1645" r="17.8"/><circle cx="1424.8" cy="1645" r="9.5"/>
<path d="M1395 1645 H1443.2 M1450.4 1645 H1458 M1465.4 1645 H1514.4 M1424.8 1618 V1673 M1424.8 1641.4 v7.2"/>
<path d="M1466.6 1637.2 L1500.2 1628.2 V1662.8 L1466.6 1654 Z"/>
</g>
<g fill="#151515" font-size="12.3">
<text x="1325" y="1624.6" text-anchor="middle">DATE</text>
<text x="979.6" y="1650" textLength="43" lengthAdjust="spacingAndGlyphs">DRAWN</text>
<text x="1056.6" y="1650" textLength="103" lengthAdjust="spacingAndGlyphs">Dorus Bannenberg</text>
<text x="1303" y="1650" textLength="49.4" lengthAdjust="spacingAndGlyphs">12-7-2021</text>
<text x="981" y="1675" textLength="49.6" lengthAdjust="spacingAndGlyphs">REVISION</text>
<text x="1562.2" y="1627.8" font-size="12" textLength="26" lengthAdjust="spacingAndGlyphs">TITLE:</text>
<text x="1744.4" y="1671.4" font-size="20.6" textLength="68.5" lengthAdjust="spacingAndGlyphs">HO.S10</text>
<text x="1302" y="1749" font-size="12.3" textLength="193" lengthAdjust="spacingAndGlyphs">Liessentstraat 4, 5405 AG Uden (NL)</text>
<text x="1562.2" y="1752" font-size="12" >Drawing no.</text>
</g>
<g font-size="44" font-weight="bold" fill="#828282">
<text x="1036.4" y="1768.3" textLength="33.5" lengthAdjust="spacingAndGlyphs">F</text>
<text x="1072" y="1768.3" textLength="38.5" lengthAdjust="spacingAndGlyphs">U</text>
<text x="1118.6" y="1768.3" textLength="33" lengthAdjust="spacingAndGlyphs">R</text>
<text x="1161.6" y="1768.3" textLength="40" lengthAdjust="spacingAndGlyphs">N</text>
<text x="1211.4" y="1768.3" textLength="33.5" lengthAdjust="spacingAndGlyphs">S</text>
</g>
<text x="1242.6" y="1736.8" font-size="8.5" fill="#7c7c7c">®</text>
</svg>
<div class="strip"></div>
<div class="menubar">
<span class="mi" style="left:-41px">Oversigt</span>
<span class="mi" style="left:81px">Gå</span>
<span class="mi" style="left:145px">Værktøjer</span>
<span class="mi" style="left:282px">Vindue</span>
<span class="mi" style="left:390px">Hjælp</span>
<svg class="mbicons" width="1800" height="41" viewBox="0 0 1800 41">
<g fill="none" stroke="#fff" stroke-width="2.3" stroke-linejoin="round" stroke-linecap="round" filter="url(#mbsh)">
<path d="M1649.4 26.1 H1646.2 a2.8 2.8 0 0 1 -2.8 -2.8 V11.6 a2.8 2.8 0 0 1 2.8 -2.8 H1662.8 a2.8 2.8 0 0 1 2.8 2.8 V15"/>
<rect x="1649.6" y="15.2" width="22.4" height="16.8" rx="2.8"/>
</g>
<g filter="url(#mbsh)">
<path d="M1707.6 15.6 h4.6 l7.2 -5.6 q1.2 -0.6 1.2 0.8 v19.6 q0 1.4 -1.2 0.8 l-7.2 -5.6 h-4.6 q-1 0 -1 -1 v-8 q0 -1 1 -1z" fill="#f4ece8"/>
<path d="M1725.2 15.4 q2.6 5.2 0 10.4" fill="none" stroke="#f4ece8" stroke-width="2.1" stroke-linecap="round"/>
<path d="M1730.6 12.4 q4 8.2 0 16.4" fill="none" stroke="#f4ece8" stroke-opacity="0.55" stroke-width="2.1" stroke-linecap="round"/>
<path d="M1736 9.6 q5.2 11 0 22" fill="none" stroke="#f4ece8" stroke-opacity="0.3" stroke-width="2.1" stroke-linecap="round"/>
<path d="M1776 15 L1789 26.4 L1782.8 32 V9.4 L1789 15 L1776 26.4" fill="none" stroke="#fff" stroke-width="2.1" stroke-linejoin="miter" stroke-linecap="round"/>
</g>
<defs><filter id="mbsh" x="-20%" y="-20%" width="140%" height="160%"><feDropShadow dx="0" dy="1.5" stdDeviation="1.6" flood-color="#000" flood-opacity="0.28"/></filter></defs>
</svg>
</div>
<div class="winedge0"></div><div class="winedge1"></div>
<div class="toolbar"><span class="ttl">PDF</span>
<svg width="1800" height="88" viewBox="0 51 1800 88" style="position:absolute;left:0;top:0">
<g fill="none" stroke="#d6cfcb" stroke-width="2.1" stroke-linecap="round" stroke-linejoin="round">
<circle cx="1119" cy="93.5" r="13.2"/>
<path d="M1116.2 90.6 h3.2 v8.8 M1115.6 99.6 h7.4" stroke-width="2"/>
<circle cx="1118.8" cy="86.4" r="1.5" fill="#d6cfcb" stroke="none"/>
<circle cx="1185" cy="91" r="10.6"/><path d="M1192.8 98.8 L1199.6 105.8" stroke-width="3"/><path d="M1180.6 91 h8.8" stroke-width="2"/>
<circle cx="1244" cy="91" r="10.6"/><path d="M1251.8 98.8 L1258.6 105.8" stroke-width="3"/><path d="M1239.6 91 h8.8 M1244 86.6 v8.8" stroke-width="2"/>
<path d="M1308.6 87 h-3.4 a3 3 0 0 0 -3 3 v14 a3 3 0 0 0 3 3 h17 a3 3 0 0 0 3 -3 v-14 a3 3 0 0 0 -3 -3 h-3.4"/>
<path d="M1313.7 97 V77.6 M1308.4 82.6 l5.3 -5.3 l5.3 5.3"/>
<path d="M1389.6 105.2 h28.4" stroke-width="2"/>
<path d="M1393 98.6 l1.8 -5.2 l14.2 -14.2 q1.2 -1.2 2.4 0 l2.6 2.6 q1.2 1.2 0 2.4 l-14.2 14.2 l-5.4 1.6 z M1395 93.2 l4.8 4.8 M1407.4 80.8 l5 5" stroke-width="1.9"/>
<path d="M1458 91.8 l5.2 5 l5.2 -5" stroke-width="2.4"/>
<rect x="1514.2" y="86.4" width="19.6" height="19.2" rx="2.6"/>
<path d="M1541.6 87 q0 -7.6 -9.4 -7.6 M1535.4 75.6 l-4.2 3.8 l4.2 3.8"/>
<circle cx="1587.4" cy="93.5" r="13.2"/>
<path d="M1581.6 104.6 l5.8 -19.6 l5.8 19.6 M1583.8 97.6 h7.2" stroke-width="2"/>
<path d="M1585.2 92.4 l2.2 -7.4 l2.2 7.4z" fill="#d6cfcb" stroke-width="1"/>
<path d="M1674.6 95 v7.4 a3 3 0 0 1 -3 3 h-29.4 a3 3 0 0 1 -3 -3 v-12.4 a3 3 0 0 1 3 -3 h24"/>
<g fill="#d6cfcb" stroke="none"><circle cx="1646.4" cy="96.4" r="1.7"/><circle cx="1652.8" cy="96.4" r="1.7"/><circle cx="1659.2" cy="96.4" r="1.7"/></g>
<path d="M1663.4 96.8 l3.6 -1.2 l12 -12.4 l-2.4 -2.4 l-12 12.4 z" fill="#d6cfcb" stroke-width="1.2"/><circle cx="1680.2" cy="79.6" r="1.2" fill="#d6cfcb" stroke="none"/>
</g>
<path d="M1439.5 76 V110" stroke="#5d5453" stroke-width="1.4"/>
<rect x="1708.5" y="71.5" width="120" height="46" rx="9" fill="#463d3d" stroke="#5b5251" stroke-width="1.2"/>
<g fill="none" stroke="#b9b0ac" stroke-width="1.9" stroke-linecap="round" stroke-linejoin="round"><circle cx="1722.4" cy="92.6" r="6.8"/><path d="M1727.4 97.8 l7.4 7"/><path d="M1737 92.6 l3.8 3.6 l3.8 -3.6"/></g>
</svg>
<span class="sog">Søg</span>
</div>
<div class="tbline"></div>
<svg class="wall" width="1800" height="56" viewBox="0 1744 1800 56">
<defs>
<linearGradient id="w1" gradientUnits="userSpaceOnUse" x1="0" y1="1744" x2="40" y2="1800"><stop offset="0" stop-color="#701a2e"/><stop offset="1" stop-color="#8e2444"/></linearGradient>
<linearGradient id="w2" gradientUnits="userSpaceOnUse" x1="150" y1="1736" x2="400" y2="1812"><stop offset="0" stop-color="#5c1409"/><stop offset="0.4" stop-color="#83200f"/><stop offset="0.75" stop-color="#a53510"/><stop offset="1" stop-color="#c45004"/></linearGradient>
<linearGradient id="w2b" gradientUnits="userSpaceOnUse" x1="66" y1="1800" x2="200" y2="1760"><stop offset="0" stop-color="#8a1a18" stop-opacity="0.9"/><stop offset="1" stop-color="#8a1a18" stop-opacity="0"/></linearGradient>
<linearGradient id="w3" gradientUnits="userSpaceOnUse" x1="430" y1="1800" x2="960" y2="1744"><stop offset="0" stop-color="#7a1024"/><stop offset="0.35" stop-color="#5a0e1a"/><stop offset="0.7" stop-color="#400c14"/><stop offset="1" stop-color="#2e0a10"/></linearGradient>
<linearGradient id="w4" gradientUnits="userSpaceOnUse" x1="1000" y1="1760" x2="1352" y2="1760"><stop offset="0" stop-color="#300c0e"/><stop offset="0.5" stop-color="#4c1416"/><stop offset="1" stop-color="#6e1e1a"/></linearGradient>
<linearGradient id="w5" gradientUnits="userSpaceOnUse" x1="1350" y1="1760" x2="1610" y2="1760"><stop offset="0" stop-color="#6e1e1a"/><stop offset="0.06" stop-color="#782616"/><stop offset="0.13" stop-color="#943c10"/><stop offset="0.22" stop-color="#ac4c0c"/><stop offset="0.5" stop-color="#c86c08"/><stop offset="0.8" stop-color="#d27806"/><stop offset="1" stop-color="#c86c08"/></linearGradient>
<linearGradient id="w5v" x1="0" y1="0" x2="0" y2="1"><stop offset="0" stop-color="#3a1402" stop-opacity="0.62"/><stop offset="0.5" stop-color="#3a1402" stop-opacity="0.3"/><stop offset="1" stop-color="#3a1402" stop-opacity="0"/></linearGradient>
<linearGradient id="w45" gradientUnits="userSpaceOnUse" x1="1340" y1="1760" x2="1400" y2="1760"><stop offset="0" stop-color="#6c1c1a" stop-opacity="0"/><stop offset="1" stop-color="#8a3412"/></linearGradient>
<linearGradient id="w6" x1="0" y1="0" x2="0" y2="1"><stop offset="0" stop-color="#621614"/><stop offset="1" stop-color="#8c2020"/></linearGradient>
<linearGradient id="wsh" x1="0" y1="0" x2="0" y2="1"><stop offset="0" stop-color="#000" stop-opacity="0.6"/><stop offset="0.12" stop-color="#000" stop-opacity="0.36"/><stop offset="0.5" stop-color="#000" stop-opacity="0.14"/><stop offset="1" stop-color="#000" stop-opacity="0"/></linearGradient>
</defs>
<rect x="0" y="1745" width="1800" height="56" fill="#4a0c16"/>
<polygon points="0,1745 66,1745 93,1800 0,1800" fill="url(#w1)"/>
<polygon points="66,1745 416,1745 433,1800 93,1800" fill="url(#w2)"/>
<polygon points="66,1745 416,1745 433,1800 93,1800" fill="url(#w2b)"/>
<polygon points="416,1745 986,1745 1019,1800 433,1800" fill="url(#w3)"/>
<polygon points="986,1745 1352,1745 1352,1800 1019,1800" fill="url(#w4)"/>
<polygon points="1350,1745 1609,1745 1596,1800 1350,1800" fill="url(#w5)"/>
<polygon points="986,1745 1609,1745 1596,1800 1019,1800" fill="url(#w5v)"/>
<polygon points="1609,1745 1800,1745 1800,1800 1596,1800" fill="url(#w6)"/>
<rect x="0" y="1745" width="1800" height="30" fill="url(#wsh)"/>
</svg>
</body></html>
